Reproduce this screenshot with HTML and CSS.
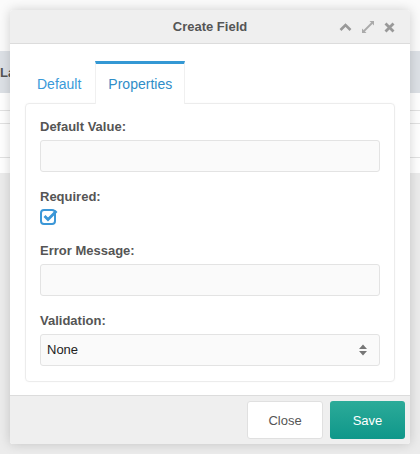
FILE: index.html
```html
<!DOCTYPE html>
<html>
<head>
<meta charset="utf-8">
<link rel="stylesheet" href="styles.css">
</head>
<body>
<div class="backdrop">
  <div class="bg-top"></div>
  <div class="bg-head"><span class="bg-label">Label</span></div>
  <div class="bg-row r1"></div>
  <div class="bg-row r2"></div>
  <div class="bg-row r3"></div>
  <div class="bg-row r4"></div>
  <div class="bg-foot"></div>
</div>

<div class="dialog">
  <div class="dlg-header">
    <span class="dlg-title">Create Field</span>
    <div class="dlg-tools">
      <svg class="tool" width="13" height="10" viewBox="0 0 13 10"><path d="M1.5 8 L6.5 3 L11.5 8" fill="none" stroke="#999" stroke-width="2.6"/></svg>
      <svg class="tool" width="14" height="14" viewBox="0 0 14 14"><path d="M8.5 1 H13 V5.5 Z M1 8.5 V13 H5.5 Z" fill="#aaa"/><path d="M11 3 L3 11" stroke="#aaa" stroke-width="1.8"/></svg>
      <svg class="tool" width="11" height="11" viewBox="0 0 11 11"><path d="M1.5 1.5 L9.5 9.5 M9.5 1.5 L1.5 9.5" stroke="#999" stroke-width="2.8"/></svg>
    </div>
  </div>
  <div class="dlg-body">
    <div class="tabs">
      <div class="tab">Default</div>
      <div class="tab active">Properties</div>
    </div>
    <div class="panel">
      <div class="group">
        <div class="label">Default Value:</div>
        <div class="input"></div>
      </div>
      <div class="group">
        <div class="label">Required:</div>
        <div class="check">
          <svg width="18" height="17" viewBox="0 0 18 17"><rect x="1" y="2" width="14" height="14" rx="3" fill="none" stroke="#3b97d7" stroke-width="2"/><path d="M4.5 8 L8 11.5 L16.5 3" fill="none" stroke="#3b97d7" stroke-width="2.8"/></svg>
        </div>
      </div>
      <div class="group">
        <div class="label">Error Message:</div>
        <div class="input"></div>
      </div>
      <div class="group last">
        <div class="label">Validation:</div>
        <div class="input select">
          <span>None</span>
          <svg width="10" height="14" viewBox="0 0 10 14"><path d="M1 6 L5 1.5 L9 6 Z M1 8 L5 12.5 L9 8 Z" fill="#777"/></svg>
        </div>
      </div>
    </div>
  </div>
  <div class="dlg-footer">
    <div class="btn btn-close">Close</div>
    <div class="btn btn-save">Save</div>
  </div>
</div>
</body>
</html>
```

FILE: styles.css
```css
html, body {
  margin: 0;
  padding: 0;
}
body {
  width: 420px;
  height: 454px;
  position: relative;
  overflow: hidden;
  background: #f4f4f4;
  font-family: "Liberation Sans", Arial, sans-serif;
  color: #555;
}
.backdrop {
  display: flex;
  flex-direction: column;
  height: 454px;
}
.bg-top {
  height: 51px;
  background: #fbfbfb;
}
.bg-head {
  height: 42px;
  background: #dde1e6;
  display: flex;
  align-items: center;
}
.bg-label {
  font-weight: bold;
  font-size: 13px;
  color: #555;
  padding-left: 0;
}
.bg-row {
  background: #fff;
  border-bottom: 1px solid #e2e2e2;
}
.bg-row.r1 { height: 17px; }
.bg-row.r2 { height: 12px; }
.bg-row.r3 { height: 33px; }
.bg-row.r4 { height: 15px; border-bottom: none; }
.bg-foot {
  flex: 1;
  background: #ececec;
}

.dialog {
  position: absolute;
  left: 10px;
  top: 10px;
  width: 400px;
  height: 434px;
  background: #fff;
  border-radius: 3px;
  box-shadow: 0 0 12px rgba(0,0,0,0.18);
  display: flex;
  flex-direction: column;
  overflow: hidden;
}
.dlg-header {
  height: 33px;
  background: #efefef;
  border-bottom: 1px solid #dcdcdc;
  position: relative;
  display: flex;
  align-items: center;
  justify-content: center;
}
.dlg-title {
  font-weight: bold;
  font-size: 13px;
  color: #555;
}
.dlg-tools {
  position: absolute;
  right: 15px;
  top: 9px;
  display: flex;
  align-items: center;
  gap: 9px;
  height: 16px;
}
.tool { display: block; }

.dlg-body {
  flex: 1;
  padding: 17px 15px 0 15px;
}
.tabs {
  display: flex;
  height: 42px;
}
.tab {
  padding: 0 12px;
  margin-right: 2px;
  font-size: 14px;
  color: #3a9ad9;
  border-top: 3px solid transparent;
  display: flex;
  align-items: center;
  box-sizing: border-box;
}
.tab.active {
  border-top-color: #3498d4;
  background: #fff;
  color: #2f8dc8;
  border-left: 1px solid #f0f0f0;
  border-right: 1px solid #f0f0f0;
  position: relative;
  margin-bottom: -1px;
  height: 43px;
  z-index: 1;
}
.panel {
  border: 1px solid #ececec;
  border-radius: 4px;
  padding: 14px 14px 15px;
  box-shadow: 0 0 2px rgba(0,0,0,0.04);
}
.group {
  margin-bottom: 16px;
}
.group.last { margin-bottom: 0; }
.label {
  font-weight: bold;
  font-size: 13px;
  line-height: 18px;
  color: #555;
  margin-bottom: 4px;
}
.input {
  height: 30px;
  background: #fafafa;
  border: 1px solid #e3e3e3;
  border-radius: 3px;
}
.check {
  height: 18px;
  margin-top: -2px;
  margin-bottom: 2px;
}
.check svg { display: block; }
.select {
  display: flex;
  align-items: center;
  justify-content: space-between;
  padding: 0 11px 0 6px;
  font-size: 13px;
  color: #222;
}
.select span { margin-top: -2px; }

.dlg-footer {
  height: 48px;
  background: #efefef;
  border-top: 1px solid #dcdcdc;
  display: flex;
  justify-content: flex-end;
  align-items: center;
  gap: 7px;
  padding-right: 5px;
}
.btn {
  height: 38px;
  box-sizing: border-box;
  border-radius: 3px;
  font-size: 13px;
  display: flex;
  align-items: center;
  justify-content: center;
}
.btn-close {
  width: 76px;
  background: #fff;
  border: 1px solid #e0e0e0;
  color: #555;
}
.btn-save {
  width: 75px;
  background: linear-gradient(#2cab99, #0f978a);
  color: #fff;
}
```
